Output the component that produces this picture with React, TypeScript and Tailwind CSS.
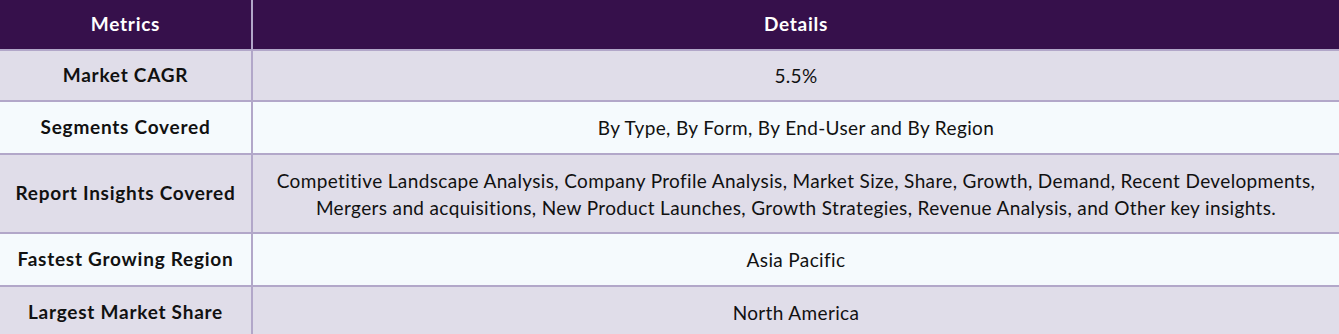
import React from "react";

const rows: { m: string; d: string[]; h: string; bg: string }[] = [
  { m: "Market CAGR", d: ["5.5%"], h: "h-[51px]", bg: "bg-[#e0dde9]" },
  { m: "Segments Covered", d: ["By Type, By Form, By End-User and By Region"], h: "h-[53px]", bg: "bg-[#f5fafd]" },
  {
    m: "Report Insights Covered",
    d: [
      "Competitive Landscape Analysis, Company Profile Analysis, Market Size, Share, Growth, Demand, Recent Developments,",
      "Mergers and acquisitions, New Product Launches, Growth Strategies, Revenue Analysis, and Other key insights.",
    ],
    h: "h-[79px]",
    bg: "bg-[#e0dde9]",
  },
  { m: "Fastest Growing Region", d: ["Asia Pacific"], h: "h-[53px]", bg: "bg-[#f5fafd]" },
  { m: "Largest Market Share", d: ["North America"], h: "h-[53px]", bg: "bg-[#e0dde9]" },
];

export default function App() {
  return (
    <div className="w-[1339px] h-[334px] overflow-hidden bg-[#e0dde9] text-[19px] text-[#111]" style={{ fontFamily: "Lato, 'Noto Sans', sans-serif" }}>
      <div className="flex h-[49px] bg-[#36104b] text-white font-bold tracking-[0.75px]">
        <div className="w-[251px] flex items-center justify-center">Metrics</div>
        <div className="w-[2px] bg-[#b2a7c9]" />
        <div className="flex-1 flex items-center justify-center">Details</div>
      </div>
      {rows.map((r) => (
        <div key={r.m} className={`flex border-t-2 border-[#b2a7c9] ${r.h} ${r.bg}`}>
          <div className="w-[251px] flex items-center justify-center font-bold tracking-[0.75px]">{r.m}</div>
          <div className="w-[2px] bg-[#b2a7c9]" />
          <div className="flex-1 flex flex-col items-center justify-center leading-[27px] tracking-[0.36px]">
            {r.d.map((l) => (
              <div key={l}>{l}</div>
            ))}
          </div>
        </div>
      ))}
    </div>
  );
}
